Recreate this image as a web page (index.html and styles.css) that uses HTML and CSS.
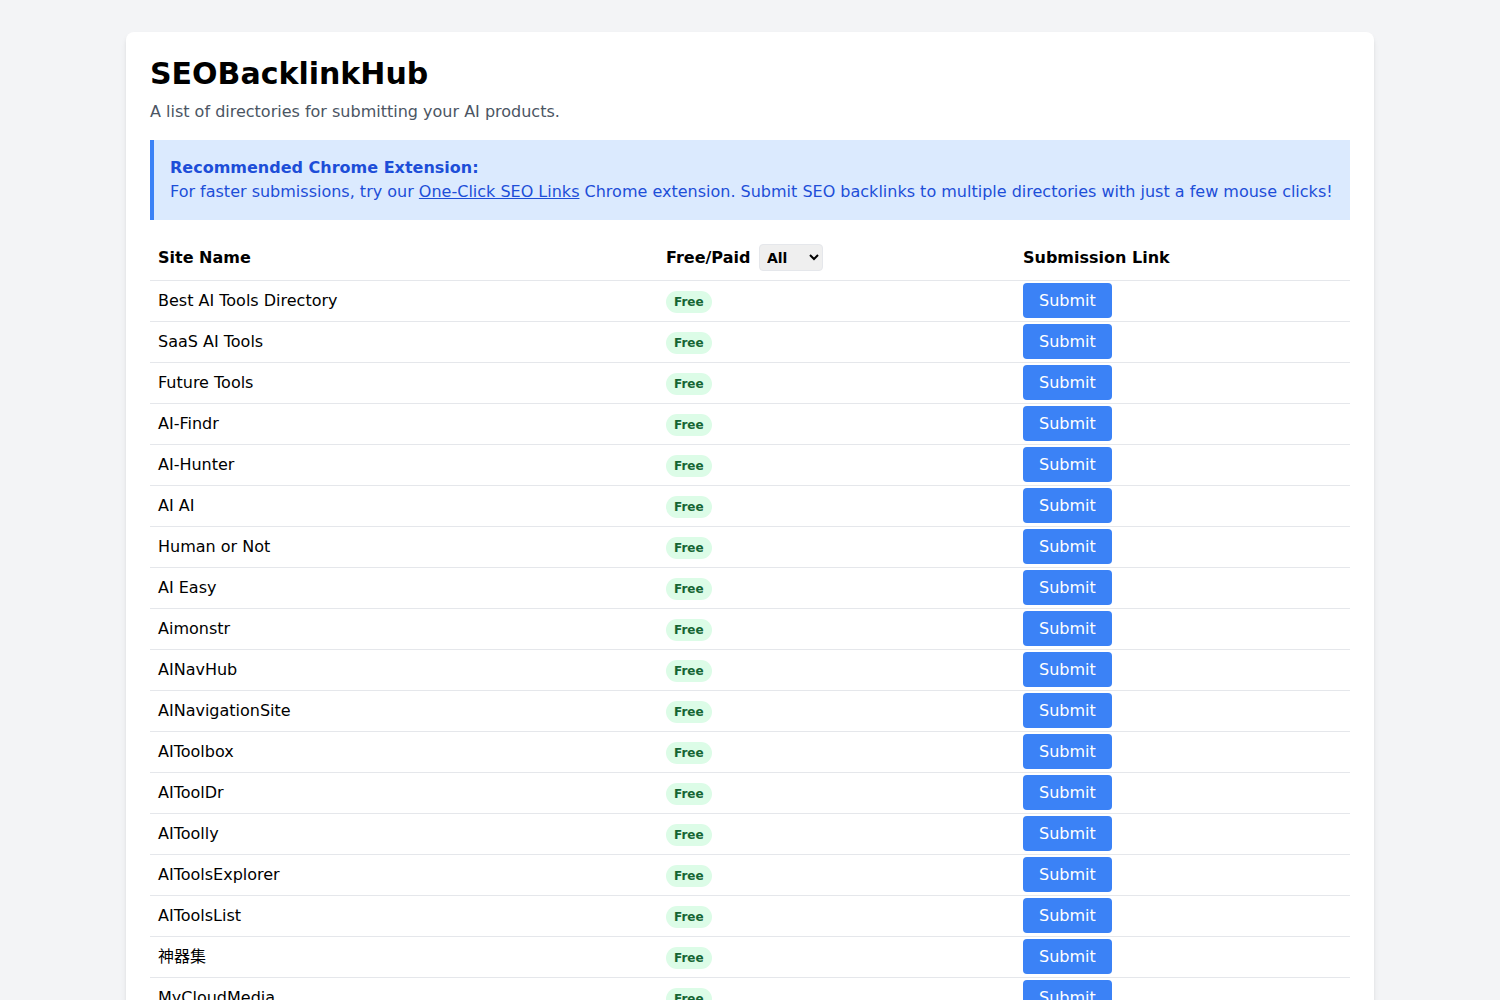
FILE: index.html
```html
<!DOCTYPE html>
<html lang="en">
<head>
<meta charset="utf-8">
<title>SEOBacklinkHub</title>
<link rel="stylesheet" href="styles.css">
</head>
<body>
<main class="card">
  <h1 class="title">SEOBacklinkHub</h1>
  <p class="subtitle">A list of directories for submitting your AI products.</p>
  <div class="notice">
    <p class="notice-title">Recommended Chrome Extension:</p>
    <p class="notice-text">For faster submissions, try our <a href="#" class="notice-link">One-Click SEO Links</a> Chrome extension. Submit SEO backlinks to multiple directories with just a few mouse clicks!</p>
  </div>
  <table class="sites">
    <colgroup>
      <col class="col-name">
      <col class="col-type">
      <col class="col-link">
    </colgroup>
    <thead>
      <tr>
        <th>Site Name</th>
        <th>Free/Paid <select class="filter"><option>All</option><option>Free</option><option>Paid</option></select></th>
        <th>Submission Link</th>
      </tr>
    </thead>
    <tbody>
      <tr><td>Best AI Tools Directory</td><td><span class="badge">Free</span></td><td><a href="#" class="submit">Submit</a></td></tr>
      <tr><td>SaaS AI Tools</td><td><span class="badge">Free</span></td><td><a href="#" class="submit">Submit</a></td></tr>
      <tr><td>Future Tools</td><td><span class="badge">Free</span></td><td><a href="#" class="submit">Submit</a></td></tr>
      <tr><td>AI-Findr</td><td><span class="badge">Free</span></td><td><a href="#" class="submit">Submit</a></td></tr>
      <tr><td>AI-Hunter</td><td><span class="badge">Free</span></td><td><a href="#" class="submit">Submit</a></td></tr>
      <tr><td>AI AI</td><td><span class="badge">Free</span></td><td><a href="#" class="submit">Submit</a></td></tr>
      <tr><td>Human or Not</td><td><span class="badge">Free</span></td><td><a href="#" class="submit">Submit</a></td></tr>
      <tr><td>AI Easy</td><td><span class="badge">Free</span></td><td><a href="#" class="submit">Submit</a></td></tr>
      <tr><td>Aimonstr</td><td><span class="badge">Free</span></td><td><a href="#" class="submit">Submit</a></td></tr>
      <tr><td>AINavHub</td><td><span class="badge">Free</span></td><td><a href="#" class="submit">Submit</a></td></tr>
      <tr><td>AINavigationSite</td><td><span class="badge">Free</span></td><td><a href="#" class="submit">Submit</a></td></tr>
      <tr><td>AIToolbox</td><td><span class="badge">Free</span></td><td><a href="#" class="submit">Submit</a></td></tr>
      <tr><td>AIToolDr</td><td><span class="badge">Free</span></td><td><a href="#" class="submit">Submit</a></td></tr>
      <tr><td>AIToolly</td><td><span class="badge">Free</span></td><td><a href="#" class="submit">Submit</a></td></tr>
      <tr><td>AIToolsExplorer</td><td><span class="badge">Free</span></td><td><a href="#" class="submit">Submit</a></td></tr>
      <tr><td>AIToolsList</td><td><span class="badge">Free</span></td><td><a href="#" class="submit">Submit</a></td></tr>
      <tr><td>神器集</td><td><span class="badge">Free</span></td><td><a href="#" class="submit">Submit</a></td></tr>
      <tr><td>MyCloudMedia</td><td><span class="badge">Free</span></td><td><a href="#" class="submit">Submit</a></td></tr>
    </tbody>
  </table>
</main>
</body>
</html>
```

FILE: styles.css
```css
* { box-sizing: border-box; }

html, body {
  margin: 0;
  padding: 0;
}

body {
  background: #f3f4f6;
  font-family: "DejaVu Sans", "Noto Sans CJK SC", sans-serif;
  font-size: 16px;
  line-height: 24px;
  color: #000;
  padding: 32px 0;
}

.card {
  width: 1248px;
  margin: 0 auto;
  background: #fff;
  border-radius: 8px;
  box-shadow: 0 4px 6px -1px rgba(0,0,0,0.1), 0 2px 4px -2px rgba(0,0,0,0.1);
  padding: 24px;
}

.title {
  margin: 0 0 8px;
  font-size: 30px;
  line-height: 36px;
  font-weight: 700;
}

.subtitle {
  margin: 0 0 16px;
  color: #4b5563;
}

.notice {
  background: #dbeafe;
  border-left: 4px solid #3b82f6;
  padding: 16px;
  color: #1d4ed8;
  margin-bottom: 16px;
}

.notice p { margin: 0; }

.notice-title { font-weight: 700; }

.notice-link {
  color: #1d4ed8;
  text-decoration: underline;
}

.sites {
  width: 100%;
  border-collapse: collapse;
  table-layout: fixed;
  text-align: left;
}

.col-name { width: 508px; }
.col-type { width: 357px; }
.col-link { width: 335px; }

.sites th,
.sites td {
  padding: 8px;
  height: 41px;
  border-bottom: 1px solid #e5e7eb;
  vertical-align: middle;
  line-height: 24px;
}

.sites th {
  font-weight: 700;
  height: 44px;
}

.filter {
  margin-left: 3px;
  font-family: inherit;
  font-size: 14px;
  font-weight: 700;
  height: 27px;
  width: 64px;
  padding: 0 3px;
  background-color: #efefef;
  border: 1px solid #e5e7eb;
  border-radius: 4px;
  color: #000;
  vertical-align: baseline;
}

.badge {
  background: #dcfce7;
  color: #166534;
  font-size: 12px;
  line-height: 16px;
  font-weight: 700;
  padding: 4px 8px;
  border-radius: 9999px;
}

.submit {
  background: #3b82f6;
  color: #fff;
  text-decoration: none;
  padding: 8px 16px;
  border-radius: 4px;
}
```
